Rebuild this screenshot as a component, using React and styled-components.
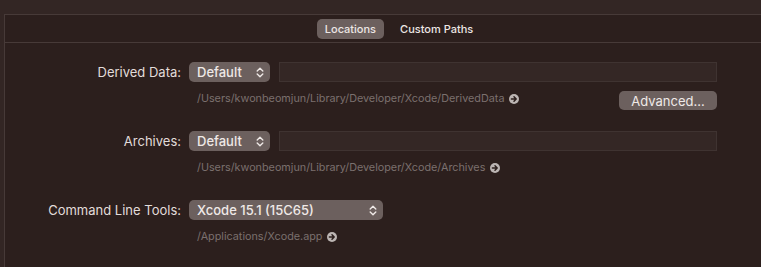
import React from "react";
import styled, { createGlobalStyle } from "styled-components";

const Global = createGlobalStyle`
  html, body { margin: 0; padding: 0; }
  body {
    background: #332624;
    overflow: hidden;
    font-family: Inter, "Noto Sans", "Liberation Sans", sans-serif;
    -webkit-font-smoothing: antialiased;
  }
`;

const Page = styled.div`
  width: 761px;
  height: 267px;
  padding: 14px 0 0 4px;
  box-sizing: border-box;
  overflow: hidden;
`;

const Panel = styled.div`
  width: 790px;
  height: 300px;
  background: #2c1f1d;
  border: 1px solid #473a38;
  box-sizing: border-box;
`;

const TabBar = styled.div`
  height: 28px;
  border-bottom: 1px solid #473a38;
  display: flex;
  justify-content: center;
  align-items: center;
  gap: 8px;
  box-sizing: border-box;
  padding-top: 1px;
`;

const Tab = styled.div`
  height: 20px;
  padding: 0 8px;
  border-radius: 5px;
  display: flex;
  align-items: center;
  font-size: 11px;
  font-weight: 500;
  color: #ece6e4;
  background: ${(p) => (p.$active ? "#6c605e" : "transparent")};
`;

const Form = styled.div`
  display: flex;
  flex-direction: column;
  gap: 20px;
  padding-top: 19px;
`;

const Section = styled.div`
  display: grid;
  grid-template-columns: 176px 1fr;
  column-gap: 8px;
  row-gap: 9px;
  grid-template-rows: 20px 20px;
`;

const Label = styled.div`
  font-size: 13px;
  color: #e2dcda;
  text-align: right;
  display: flex;
  align-items: center;
  justify-content: flex-end;
`;

const ControlRow = styled.div`
  display: flex;
  align-items: center;
  gap: 9px;
`;

const Popup = styled.div`
  width: ${(p) => p.$w}px;
  height: 20px;
  box-sizing: border-box;
  border-radius: 5px;
  background: #6c605e;
  display: flex;
  align-items: center;
  justify-content: space-between;
  padding: 0 6px 0 8px;
  font-size: 13px;
  font-weight: 500;
  color: #efe9e7;
`;

const TextField = styled.div`
  width: 438px;
  height: 20px;
  box-sizing: border-box;
  background: #342725;
  border: 1px solid #3f3331;
`;

const SubRow = styled.div`
  grid-column: 2;
  display: flex;
  align-items: flex-start;
  width: 528px;
`;

const Path = styled.div`
  margin-left: 8px;
  height: 15px;
  display: flex;
  align-items: center;
  gap: 5px;
  font-size: 10.8px;
  color: #7b706e;
  flex: 1;
`;

const Button = styled.div`
  height: 19px;
  width: 98px;
  box-sizing: border-box;
  border-radius: 5px;
  background: #6c605e;
  color: #efe9e7;
  font-size: 13px;
  font-weight: 400;
  display: flex;
  align-items: center;
  justify-content: center;
`;

const Chevrons = () => (
  <svg width="8" height="11" viewBox="0 0 8 11" fill="none">
    <path d="M1.2 4 L4 1.3 L6.8 4" stroke="#efe9e7" strokeWidth="1.4" strokeLinecap="round" strokeLinejoin="round" />
    <path d="M1.2 7 L4 9.7 L6.8 7" stroke="#efe9e7" strokeWidth="1.4" strokeLinecap="round" strokeLinejoin="round" />
  </svg>
);

const Arrow = () => (
  <svg width="10" height="10" viewBox="0 0 10 10">
    <circle cx="5" cy="5" r="5" fill="#bcb5b3" />
    <path d="M2.4 5 H7.2 M5 2.8 L7.2 5 L5 7.2" stroke="#2c1f1d" strokeWidth="1.5" fill="none" strokeLinecap="round" strokeLinejoin="round" />
  </svg>
);

const FormSection = ({ label, value, width, path, field, button }) => (
  <Section>
    <Label>{label}</Label>
    <ControlRow>
      <Popup $w={width}>
        <span>{value}</span>
        <Chevrons />
      </Popup>
      {field && <TextField />}
    </ControlRow>
    <SubRow>
      <Path>
        <span>{path}</span>
        <Arrow />
      </Path>
      {button && <Button>{button}</Button>}
    </SubRow>
  </Section>
);

export default function App() {
  return (
    <>
      <Global />
      <Page>
        <Panel>
          <TabBar>
            <Tab $active>Locations</Tab>
            <Tab>Custom Paths</Tab>
          </TabBar>
          <Form>
            <FormSection
              label="Derived Data:"
              value="Default"
              width={81}
              field
              path="/Users/kwonbeomjun/Library/Developer/Xcode/DerivedData"
              button="Advanced..."
            />
            <FormSection
              label="Archives:"
              value="Default"
              width={81}
              field
              path="/Users/kwonbeomjun/Library/Developer/Xcode/Archives"
            />
            <FormSection
              label="Command Line Tools:"
              value="Xcode 15.1 (15C65)"
              width={194}
              path="/Applications/Xcode.app"
            />
          </Form>
        </Panel>
      </Page>
    </>
  );
}
